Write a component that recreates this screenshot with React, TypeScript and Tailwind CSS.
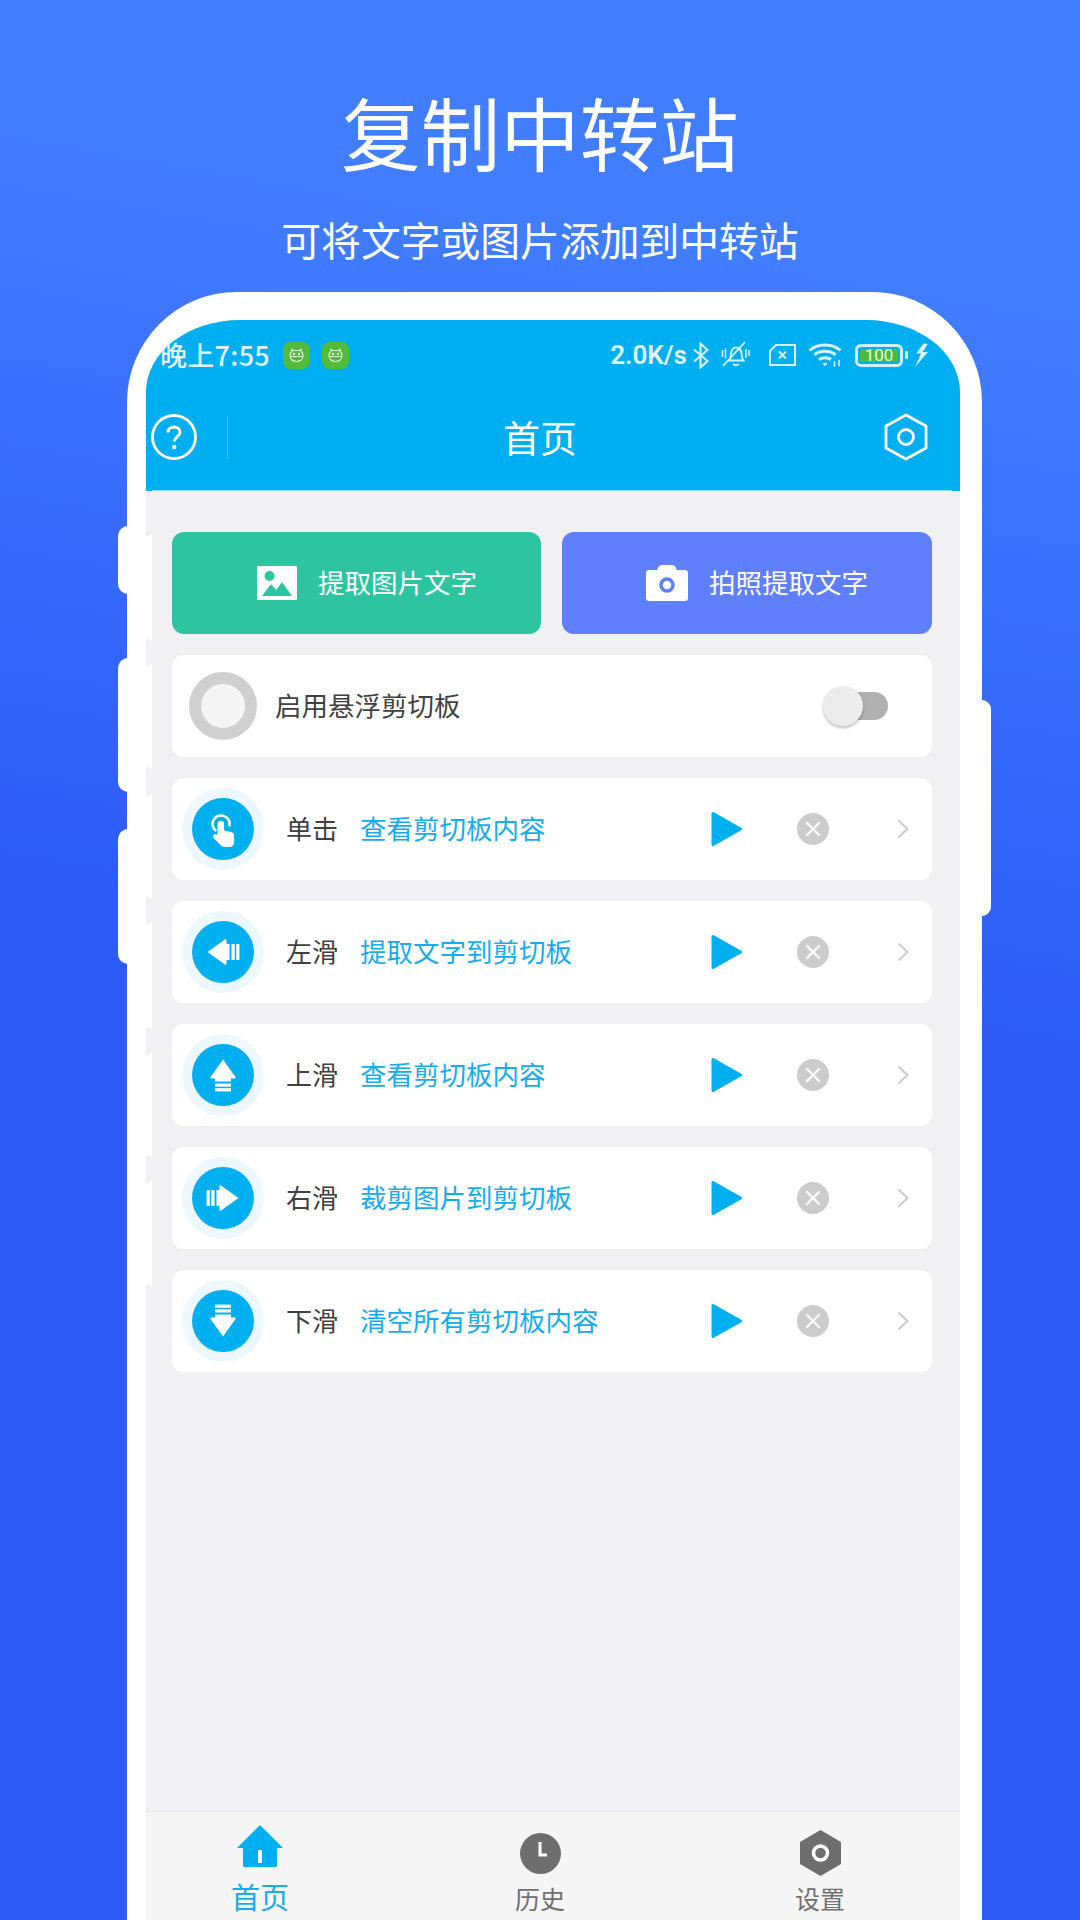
import React from "react";

const rows = [
  { label: "单击", text: "查看剪切板内容", icon: "hand" },
  { label: "左滑", text: "提取文字到剪切板", icon: 0 },
  { label: "上滑", text: "查看剪切板内容", icon: 90 },
  { label: "右滑", text: "裁剪图片到剪切板", icon: 180 },
  { label: "下滑", text: "清空所有剪切板内容", icon: 270 },
];

function Hand() {
  return (
    <svg width="62" height="62" viewBox="0 0 62 62">
      <circle cx="29" cy="26" r="8.5" fill="none" stroke="#fff" strokeWidth="2.6" strokeDasharray="37 16" transform="rotate(125 29 26)" />
      <path d="M25.500 26a3.300 3.300 0 0 1 6.600 0v6.500l7 1.500c2 .5 3 1.700 3 3.500V44c0 3-2 5-5 5h-4c-2.500 0-4-1-5.500-3L21.500 40c-1-1.500-.5-3 .5-3.700 1-.7 2.300-.3 3.500 .7z" fill="#fff" />
    </svg>
  );
}

function Arrow({ deg }: { deg: number }) {
  return (
    <svg width="62" height="62" viewBox="0 0 62 62">
      <g fill="#fff" transform={`rotate(${deg} 31 31)`}>
        <path d="M15.500 31 33 18.500a1 1 0 0 1 1.500.8V23H37.500V39H34.500v3.700a1 1 0 0 1-1.500.8z" />
        <rect x="39.500" y="23" width="3.200" height="16" />
        <rect x="44.200" y="23" width="3.200" height="16" />
      </g>
    </svg>
  );
}

function Row({ r }: { r: (typeof rows)[number] }) {
  return (
    <div className="flex items-center h-[102px] rounded-[12px] bg-white pl-[10px]">
      <div className="w-[82px] h-[82px] rounded-full bg-[#edf7fe] flex items-center justify-center shrink-0">
        <div className="w-[62px] h-[62px] rounded-full bg-[#00aff0] flex items-center justify-center">
          {r.icon === "hand" ? <Hand /> : <Arrow deg={r.icon as number} />}
        </div>
      </div>
      <span className="ml-[22px] w-[74px] shrink-0 text-[26px] leading-[30px] pb-[2px] text-[#404040]">{r.label}</span>
      <span className="w-[351px] shrink-0 text-[26.500px] leading-[30px] pb-[2px] text-[#15acef]">{r.text}</span>
      <svg width="32" height="36" viewBox="0 0 32 36" className="shrink-0">
        <path d="M2 2.500 29.500 18 2 33.500z" fill="#00aff0" stroke="#00aff0" strokeWidth="3" strokeLinejoin="round" />
      </svg>
      <div className="ml-[54px] w-[32px] h-[32px] rounded-full bg-[#cccccc] flex items-center justify-center shrink-0">
        <svg width="16" height="16" viewBox="0 0 16 16"><path d="M2 2 14 14M14 2 2 14" stroke="#fff" strokeWidth="2.400" strokeLinecap="round" /></svg>
      </div>
      <svg width="12" height="20" viewBox="0 0 12 20" className="ml-[68px] shrink-0">
        <path d="M1.500 1.500 10.500 10 1.500 18.500" fill="none" stroke="#cccccc" strokeWidth="2" />
      </svg>
    </div>
  );
}

function Bot({ className }: { className?: string }) {
  return (
    <div className={`w-[27px] h-[27px] rounded-[8px] bg-[#52bc3a] flex items-center justify-center ${className ?? ""}`}>
      <svg width="15" height="15" viewBox="0 0 15 15" fill="none" stroke="#e6f7df" strokeWidth="1.100">
        <path d="M3 3 2.800 1.500 5 2.500h5l2.200-1L12 3c1.500 1.500 2 3 2 4.500 0 4-3 6-6.500 6S1 11.500 1 7.500C1 6 1.500 4.500 3 3z" />
        <path d="M1.500 8.500h12" />
        <circle cx="5" cy="6" r=".6" fill="#e6f7df" />
        <circle cx="10" cy="6" r=".6" fill="#e6f7df" />
      </svg>
    </div>
  );
}

function StatusIcons() {
  const c = "#d9f3fd";
  return (
    <div className="flex items-center ml-auto">
      <span className="text-[26px] leading-[30px] font-semibold text-[#e0f6fe] font-['Roboto','Noto_Sans',sans-serif]">2.0K/s</span>
      <svg width="18" height="27" viewBox="0 0 18 27" className="ml-[5px]" fill="none" stroke={c} strokeWidth="2">
        <path d="M2 7.500 15.500 19 8.500 25.500V1.500L15.500 8 2 19.500" />
      </svg>
      <svg width="29" height="28" viewBox="0 0 29 28" className="ml-[11px]" fill="none" stroke={c} strokeWidth="1.800">
        <path d="M8 19.500c2-2 1.500-5 2-7.500 .8-3.500 3-5.500 5-5.500 3 0 5 2.500 5.500 5.500.4 2.500 0 5 2 7.500H8z" />
        <path d="M12 23q3 2.500 6 0" />
        <path d="M2 25 24 1" />
        <path d="M1.500 9v7M4.500 7.500v10M25 8v9M28 9v6" strokeWidth="1.500" />
      </svg>
      <svg width="28" height="22" viewBox="0 0 28 22" className="ml-[18px]" fill="none" stroke={c} strokeWidth="2">
        <path d="M8 1H27V21H2V7z" />
        <path d="M11 7.500 18 14.500M18 7.500 11 14.500" />
      </svg>
      <svg width="34" height="26" viewBox="0 0 34 26" className="ml-[12px]" fill="none" stroke={c} strokeWidth="3">
        <path d="M1.500 8.500C9 1 25 1 32.500 8.500" />
        <path d="M6.500 13c5-5 16-5 21 0" />
        <path d="M11 17.500c3-2.500 9-2.500 12 0" />
        <path d="M14.500 21.500 17 24l2.500-2.500c-1.500-1-3.500-1-5 0z" fill={c} stroke="none" />
        <path d="M26.500 19v6M31 18v6" strokeWidth="1.500" />
      </svg>
      <div className="ml-[13px] w-[48px] h-[23px] rounded-[6px] border-[3px] border-[#d0f0fc] flex items-center justify-center p-[2px]">
        <div className="w-full h-full bg-[#47bd3c] rounded-[2px] flex items-center justify-center text-[17px] leading-none text-[#eafbe4] font-['Roboto',sans-serif]">100</div>
      </div>
      <div className="ml-[2px] w-[3px] h-[8px] bg-[#d0f0fc] rounded-[1px]" />
      <svg width="15" height="24" viewBox="0 0 15 24" className="ml-[6px]" fill={c}>
        <path d="M10 0 2 10.500H7L1 24 14 9H8.500L13.500 1.500z" />
      </svg>
    </div>
  );
}

export default function App() {
  const notches = ["top-[534px] h-[107px]", "top-[664px] h-[105px]", "top-[794px] h-[105px]", "top-[922px] h-[107px]", "top-[1052px] h-[105px]", "top-[1180px] h-[107px]"];
  return (
    <div className="relative w-[1080px] h-[1920px] overflow-hidden flex flex-col bg-[linear-gradient(190deg,#417dff_0%,#417dff_15%,#2c5bf6_50%,#2c5bf6_100%)] font-['Noto_Sans_CJK_SC','Noto_Sans',sans-serif]">
      <div className="pt-[81px] h-[292px] shrink-0 flex flex-col items-center text-white">
        <div className="text-[79.500px] leading-[100px]">复制中转站</div>
        <div className="mt-[33px] text-[39.800px] leading-[50px]">可将文字或图片添加到中转站</div>
      </div>

      {/* side keys */}
      <div className="absolute left-[118px] top-[526px] w-[10px] h-[68px] bg-white rounded-l-[10px]" />
      <div className="absolute left-[118px] top-[658px] w-[10px] h-[134px] bg-white rounded-l-[10px]" />
      <div className="absolute left-[118px] top-[829px] w-[10px] h-[135px] bg-white rounded-l-[10px]" />
      <div className="absolute left-[981px] top-[700px] w-[10px] h-[216px] bg-white rounded-r-[9px]" />

      <div className="ml-[127px] w-[855px] flex-1 min-h-0 bg-white pt-[28px] px-[19px] rounded-t-[110px] flex flex-col">
        <div className="w-[814px] flex-1 min-h-0 rounded-t-[94px_72px] overflow-hidden bg-[#f1f1f4] flex flex-col">
          <div className="bg-[#00aff2] h-[171px] shrink-0 relative">
            <div className="h-[70px] flex items-center pl-[14px] pr-[31px]">
              <span className="text-[27px] leading-[30px] font-medium text-[#e0f6fe] tracking-[0.300px]">晚上7:55</span>
              <Bot className="ml-[13px]" />
              <Bot className="ml-[12px]" />
              <StatusIcons />
            </div>
            <div className="h-[94px] flex items-center pl-[5px] pr-[32px]">
              <svg width="46" height="46" viewBox="0 0 46 46" className="shrink-0" fill="none">
                <circle cx="23" cy="23" r="21.500" stroke="#fff" strokeWidth="2.800" />
                <path d="M17 18.500c0-3.500 2.500-5.500 6-5.500s6 2.200 6 5.200c0 4.300-5.800 4.500-5.800 9.300" stroke="#fff" strokeWidth="3" />
                <circle cx="23.200" cy="33" r="2.200" fill="#fff" />
              </svg>
              <div className="ml-[30px] w-px h-[43px] bg-[#3cc2f5]" />
              <span className="ml-[275px] text-[37px] leading-[50px] text-white">首页</span>
              <svg width="44" height="48" viewBox="0 0 44 48" className="ml-auto shrink-0" fill="none" stroke="#fff" strokeWidth="2.800" strokeLinejoin="round">
                <path d="M22 2 42 13V35L22 46 2 35V13z" />
                <circle cx="22" cy="24" r="7.500" />
              </svg>
            </div>
            <div className="absolute left-[6px] right-[8px] bottom-0 h-px bg-[#8fdcf9]" />
          </div>

          <div className="pt-[41px] pl-[26px] pr-[28px] flex flex-col gap-[21px]">
            <div className="flex gap-[21px]">
              <div className="w-[369px] h-[102px] rounded-[12px] bg-[#2dc4a2] flex items-center pl-[85px] gap-[21px] text-white">
                <svg width="40" height="34" viewBox="0 0 40 34">
                  <path fillRule="evenodd" d="M1 0H39a1 1 0 0 1 1 1V33a1 1 0 0 1-1 1H1a1 1 0 0 1-1-1V1a1 1 0 0 1 1-1zM5 30H35L25 16 19 24 14 18z" fill="#fff" />
                  <circle cx="12.500" cy="10" r="5" fill="#2dc4a2" />
                </svg>
                <span className="text-[26.500px] leading-[30px] pb-[2px]">提取图片文字</span>
              </div>
              <div className="w-[370px] h-[102px] rounded-[12px] bg-[#5f7fff] flex items-center pl-[84px] gap-[21px] text-white">
                <svg width="42" height="36" viewBox="0 0 42 36">
                  <path d="M11 5 12.500 2Q13.500 0 16 0H26Q28.500 0 29.500 2L31 5H39Q42 5 42 8V33Q42 36 39 36H3Q0 36 0 33V8Q0 5 3 5z" fill="#fff" />
                  <circle cx="21" cy="20" r="6" fill="none" stroke="#5f7fff" strokeWidth="3.500" />
                </svg>
                <span className="text-[26.500px] leading-[30px] pb-[2px]">拍照提取文字</span>
              </div>
            </div>

            <div className="h-[102px] rounded-[12px] bg-white flex items-center pl-[17px]">
              <div className="w-[68px] h-[68px] rounded-full border-[12px] border-[#d0d0d0] bg-[#f5f5f5] shrink-0" />
              <span className="ml-[18px] text-[26.500px] leading-[30px] pb-[3px] text-[#404040]">启用悬浮剪切板</span>
              <div className="ml-[370px] relative w-[57px] h-[28px] rounded-full bg-[#b0b0b0] shrink-0">
                <div className="absolute left-[-8px] top-[-6px] w-[40px] h-[40px] rounded-full bg-[#ececec] shadow-[0_2px_3px_rgba(0,0,0,0.25)]" />
              </div>
            </div>

            {rows.map((r) => (
              <Row key={r.label} r={r} />
            ))}
          </div>

          <div className="mt-auto h-[109px] shrink-0 bg-[#f5f5f6] border-t border-t-[#ebebee] flex gap-[220px] pl-[84px]">
            <div className="w-[60px] flex flex-col items-center pt-[13px] shrink-0">
              <svg width="46" height="42" viewBox="0 0 46 42">
                <path d="M23 0 46 23H40V40.500Q40 42 38.500 42H7.500Q6 42 6 40.500V23H0z" fill="#00aff2" />
                <rect x="21" y="25" width="4" height="13" fill="#fff" />
              </svg>
              <span className="mt-[12px] text-[29px] leading-[34px] text-[#18abee]">首页</span>
            </div>
            <div className="w-[60px] flex flex-col items-center pt-[21px] shrink-0">
              <svg width="41" height="41" viewBox="0 0 41 41">
                <circle cx="20.500" cy="20.500" r="20.500" fill="#6e6e6e" />
                <path d="M20 9V22H27" fill="none" stroke="#fff" strokeWidth="3" />
              </svg>
              <span className="mt-[9px] text-[25px] leading-[30px] text-[#707070]">历史</span>
            </div>
            <div className="w-[60px] flex flex-col items-center pt-[18px] shrink-0">
              <svg width="41" height="46" viewBox="0 0 41 46">
                <path d="M20.500 0 41 12V34L20.500 46 0 34V12z" fill="#6e6e6e" />
                <circle cx="20.500" cy="23" r="7" fill="none" stroke="#fff" strokeWidth="3.500" />
              </svg>
              <span className="mt-[7px] text-[25px] leading-[30px] text-[#707070]">设置</span>
            </div>
          </div>
        </div>
      </div>

      {notches.map((n) => (
        <div key={n} className={`absolute left-[146px] w-[6px] bg-white [clip-path:polygon(0_3px,100%_0,100%_100%,0_calc(100%-3px))] ${n}`} />
      ))}
    </div>
  );
}
